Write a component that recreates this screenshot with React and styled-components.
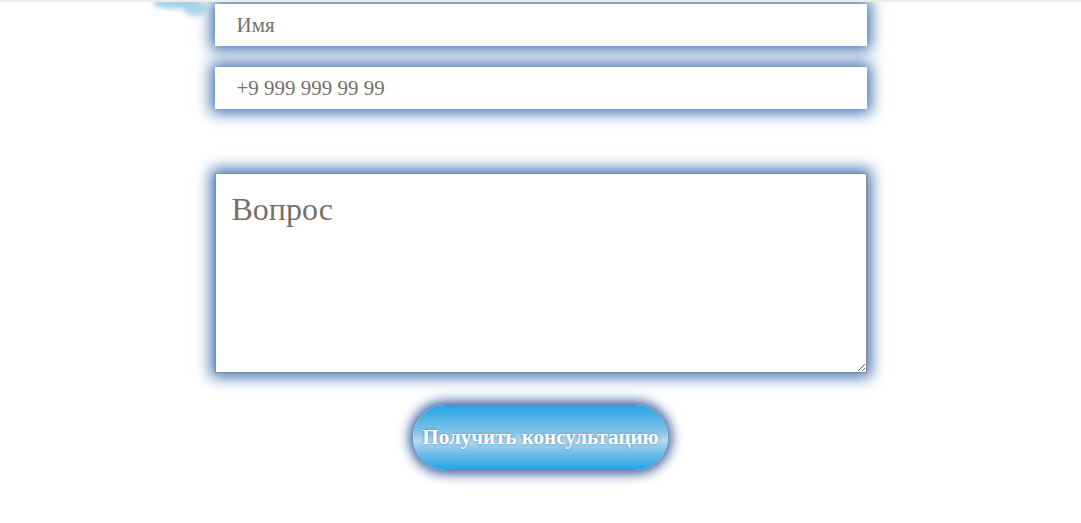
import React from 'react'
import styled, { createGlobalStyle } from 'styled-components'

const GlobalStyle = createGlobalStyle`
  html, body {
    margin: 0;
    padding: 0;
    background: #fff;
    font-family: "Liberation Serif", "Times New Roman", serif;
  }
`

const Page = styled.div`
  position: relative;
  width: 100%;
  height: 523px;
  overflow: hidden;
  border-top: 2px solid #ececec;
  box-sizing: border-box;
`

const Splash = styled.svg`
  position: absolute;
  left: 145px;
  top: -10px;
  width: 80px;
  height: 32px;
`

const Form = styled.form`
  width: 652px;
  margin: 0 auto;
  padding-top: 2px;
  display: flex;
  flex-direction: column;
  align-items: center;
`

const glow = '0 0 14px 4px rgb(62, 112, 176)'

const Field = styled.input`
  box-sizing: border-box;
  width: 100%;
  height: 42px;
  border: none;
  outline: none;
  background: #fff;
  padding: 0 22px;
  font-family: "Liberation Serif", "Times New Roman", serif;
  font-size: 21px;
  color: #666;
  box-shadow: ${glow};
  margin-bottom: ${(p) => p.$gap}px;

  &::placeholder {
    color: #767068;
  }
`

const Question = styled.textarea`
  box-sizing: border-box;
  width: 100%;
  height: 200px;
  border: 1px solid #8a8a8a;
  outline: none;
  padding: 17px 16px;
  font-family: "Liberation Serif", "Times New Roman", serif;
  font-size: 32px;
  color: #666;
  box-shadow: ${glow};
  margin-bottom: 32px;
  resize: both;

  &::placeholder {
    color: #767068;
  }
`

const Submit = styled.button`
  width: 255px;
  height: 65px;
  border: none;
  border-radius: 33px;
  background: linear-gradient(180deg, #22a4e6 0%, #7fc2e8 40%, #b6d9ee 55%, #6ebde9 75%, #22a4e6 100%);
  box-shadow: 0 0 12px 4px rgb(58, 96, 156);
  color: #fff;
  font-family: "Liberation Serif", "Times New Roman", serif;
  font-weight: bold;
  font-size: 21px;
  text-shadow: 0 0 3px rgba(30, 80, 140, 0.6);
  cursor: pointer;
  padding: 0;
`

export default function App() {
  return (
    <>
      <GlobalStyle />
      <Page>
        <Splash viewBox="0 0 80 32">
          <defs>
            <filter id="soft" x="-20%" y="-50%" width="140%" height="200%">
              <feGaussianBlur stdDeviation="2.5" />
            </filter>
          </defs>
          <g filter="url(#soft)">
            <ellipse cx="30" cy="11" rx="22" ry="6" fill="#7fbfe0" opacity="0.7" />
            <ellipse cx="50" cy="16" rx="12" ry="8" fill="#8cc8e4" opacity="0.7" />
            <ellipse cx="40" cy="10" rx="18" ry="5" fill="#a5d4ea" opacity="0.6" />
          </g>
        </Splash>
        <Form onSubmit={(e) => e.preventDefault()}>
          <Field type="text" placeholder="Имя" $gap={21} />
          <Field type="tel" placeholder="+9 999 999 99 99" $gap={64} />
          <Question placeholder="Вопрос" />
          <Submit type="submit">Получить консультацию</Submit>
        </Form>
      </Page>
    </>
  )
}
